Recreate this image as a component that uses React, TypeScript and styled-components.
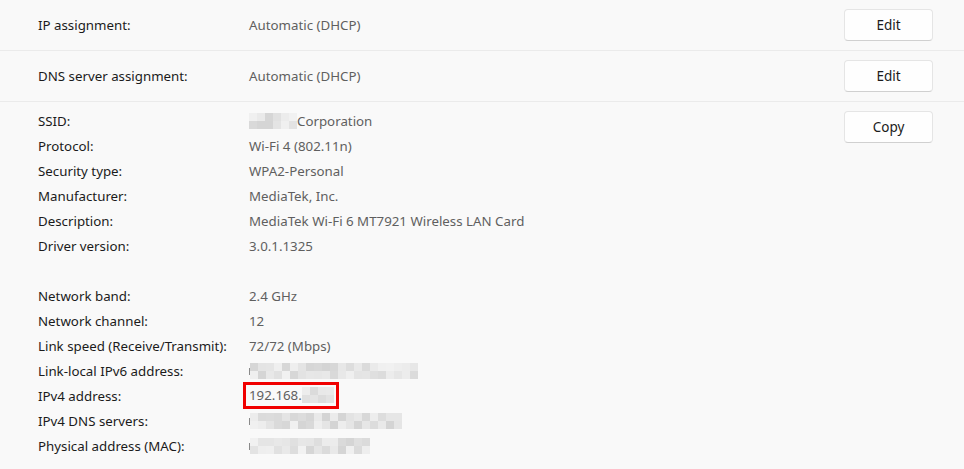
import React from 'react';
import styled, { createGlobalStyle } from 'styled-components';

const GlobalStyle = createGlobalStyle`
  html, body {
    margin: 0;
    padding: 0;
    background: #f9f9f9;
  }
  body {
    font-family: 'Segoe UI', 'Noto Sans', 'Open Sans', sans-serif;
    -webkit-font-smoothing: antialiased;
  }
`;

const Page = styled.div`
  width: 964px;
  height: 469px;
  overflow: hidden;
  background: #f9f9f9;
  font-size: 13.3px;
  color: #1b1b1b;
`;

const SettingRow = styled.div`
  display: flex;
  align-items: center;
  height: 50px;
  padding: 0 31px 0 38px;
  border-bottom: 1px solid #ebebeb;
`;

const Label = styled.div`
  width: 211px;
  flex-shrink: 0;
  color: #1b1b1b;
  white-space: nowrap;
`;

const Value = styled.div`
  flex: 1;
  color: #5f5f5f;
  white-space: nowrap;
  display: flex;
  align-items: center;
`;

const Button = styled.button`
  width: 89px;
  height: 32px;
  flex-shrink: 0;
  background: #fefefe;
  border: 1px solid #e5e5e5;
  border-bottom-color: #d0d0d0;
  border-radius: 4px;
  font-family: inherit;
  font-size: 13.5px;
  color: #1b1b1b;
  padding: 0;
`;

const Details = styled.div`
  display: flex;
  align-items: flex-start;
  padding: 6px 31px 0 38px;
`;

const DetailList = styled.div`
  flex: 1;
  display: flex;
  flex-direction: column;
`;

const DetailRow = styled.div`
  display: flex;
  align-items: center;
  height: 25px;
`;

const Spacer = styled.div`
  height: 25px;
`;

const CopyButton = styled(Button)`
  margin-top: 3px;
`;

const Highlight = styled.span`
  display: inline-flex;
  align-items: center;
  height: 21px;
  margin: -1px 0 0 -6px;
  padding: 0 2px 0 3px;
  border: 3px solid #f00000;
`;

const Pixels = styled.span<{ $cols: number }>`
  display: inline-grid;
  grid-template-columns: repeat(${(p) => p.$cols}, 8px);
  grid-auto-rows: 8px;
`;

const Cell = styled.span<{ $shade: number }>`
  background: ${(p) => `rgb(${p.$shade}, ${p.$shade}, ${p.$shade})`};
`;

const Tick = styled.span`
  width: 1px;
  height: 7px;
  margin-top: 2px;
  background: #8a8a8a;
`;

const shadeFor = (seed: number, i: number) => {
  const v = Math.abs(Math.sin(seed * 97.13 + i * 12.9898) * 43758.5453) % 1;
  return Math.round(212 + v * 30);
};

const Blur: React.FC<{ cols: number; seed: number }> = ({ cols, seed }) => (
  <Pixels $cols={cols}>
    {Array.from({ length: cols * 2 }, (_, i) => (
      <Cell key={i} $shade={shadeFor(seed, i)} />
    ))}
  </Pixels>
);

const groupOne: [string, React.ReactNode][] = [
  [
    'SSID:',
    <>
      <Blur cols={6} seed={1} />
      <span>Corporation</span>
    </>,
  ],
  ['Protocol:', 'Wi-Fi 4 (802.11n)'],
  ['Security type:', 'WPA2-Personal'],
  ['Manufacturer:', 'MediaTek, Inc.'],
  ['Description:', 'MediaTek Wi-Fi 6 MT7921 Wireless LAN Card'],
  ['Driver version:', '3.0.1.1325'],
];

const groupTwo: [string, React.ReactNode][] = [
  ['Network band:', '2.4 GHz'],
  ['Network channel:', '12'],
  ['Link speed (Receive/Transmit):', '72/72 (Mbps)'],
  [
    'Link-local IPv6 address:',
    <>
      <Tick />
      <Blur cols={21} seed={2} />
    </>,
  ],
  [
    'IPv4 address:',
    <Highlight>
      192.168.
      <Blur cols={4} seed={3} />
    </Highlight>,
  ],
  [
    'IPv4 DNS servers:',
    <>
      <Tick />
      <Blur cols={19} seed={4} />
    </>,
  ],
  [
    'Physical address (MAC):',
    <>
      <Tick />
      <Blur cols={15} seed={5} />
    </>,
  ],
];

export default function App() {
  return (
    <Page>
      <GlobalStyle />
      <SettingRow>
        <Label>IP assignment:</Label>
        <Value>Automatic (DHCP)</Value>
        <Button>Edit</Button>
      </SettingRow>
      <SettingRow>
        <Label>DNS server assignment:</Label>
        <Value>Automatic (DHCP)</Value>
        <Button>Edit</Button>
      </SettingRow>
      <Details>
        <DetailList>
          {groupOne.map(([label, value]) => (
            <DetailRow key={label}>
              <Label>{label}</Label>
              <Value>{value}</Value>
            </DetailRow>
          ))}
          <Spacer />
          {groupTwo.map(([label, value]) => (
            <DetailRow key={label}>
              <Label>{label}</Label>
              <Value>{value}</Value>
            </DetailRow>
          ))}
        </DetailList>
        <CopyButton>Copy</CopyButton>
      </Details>
    </Page>
  );
}
